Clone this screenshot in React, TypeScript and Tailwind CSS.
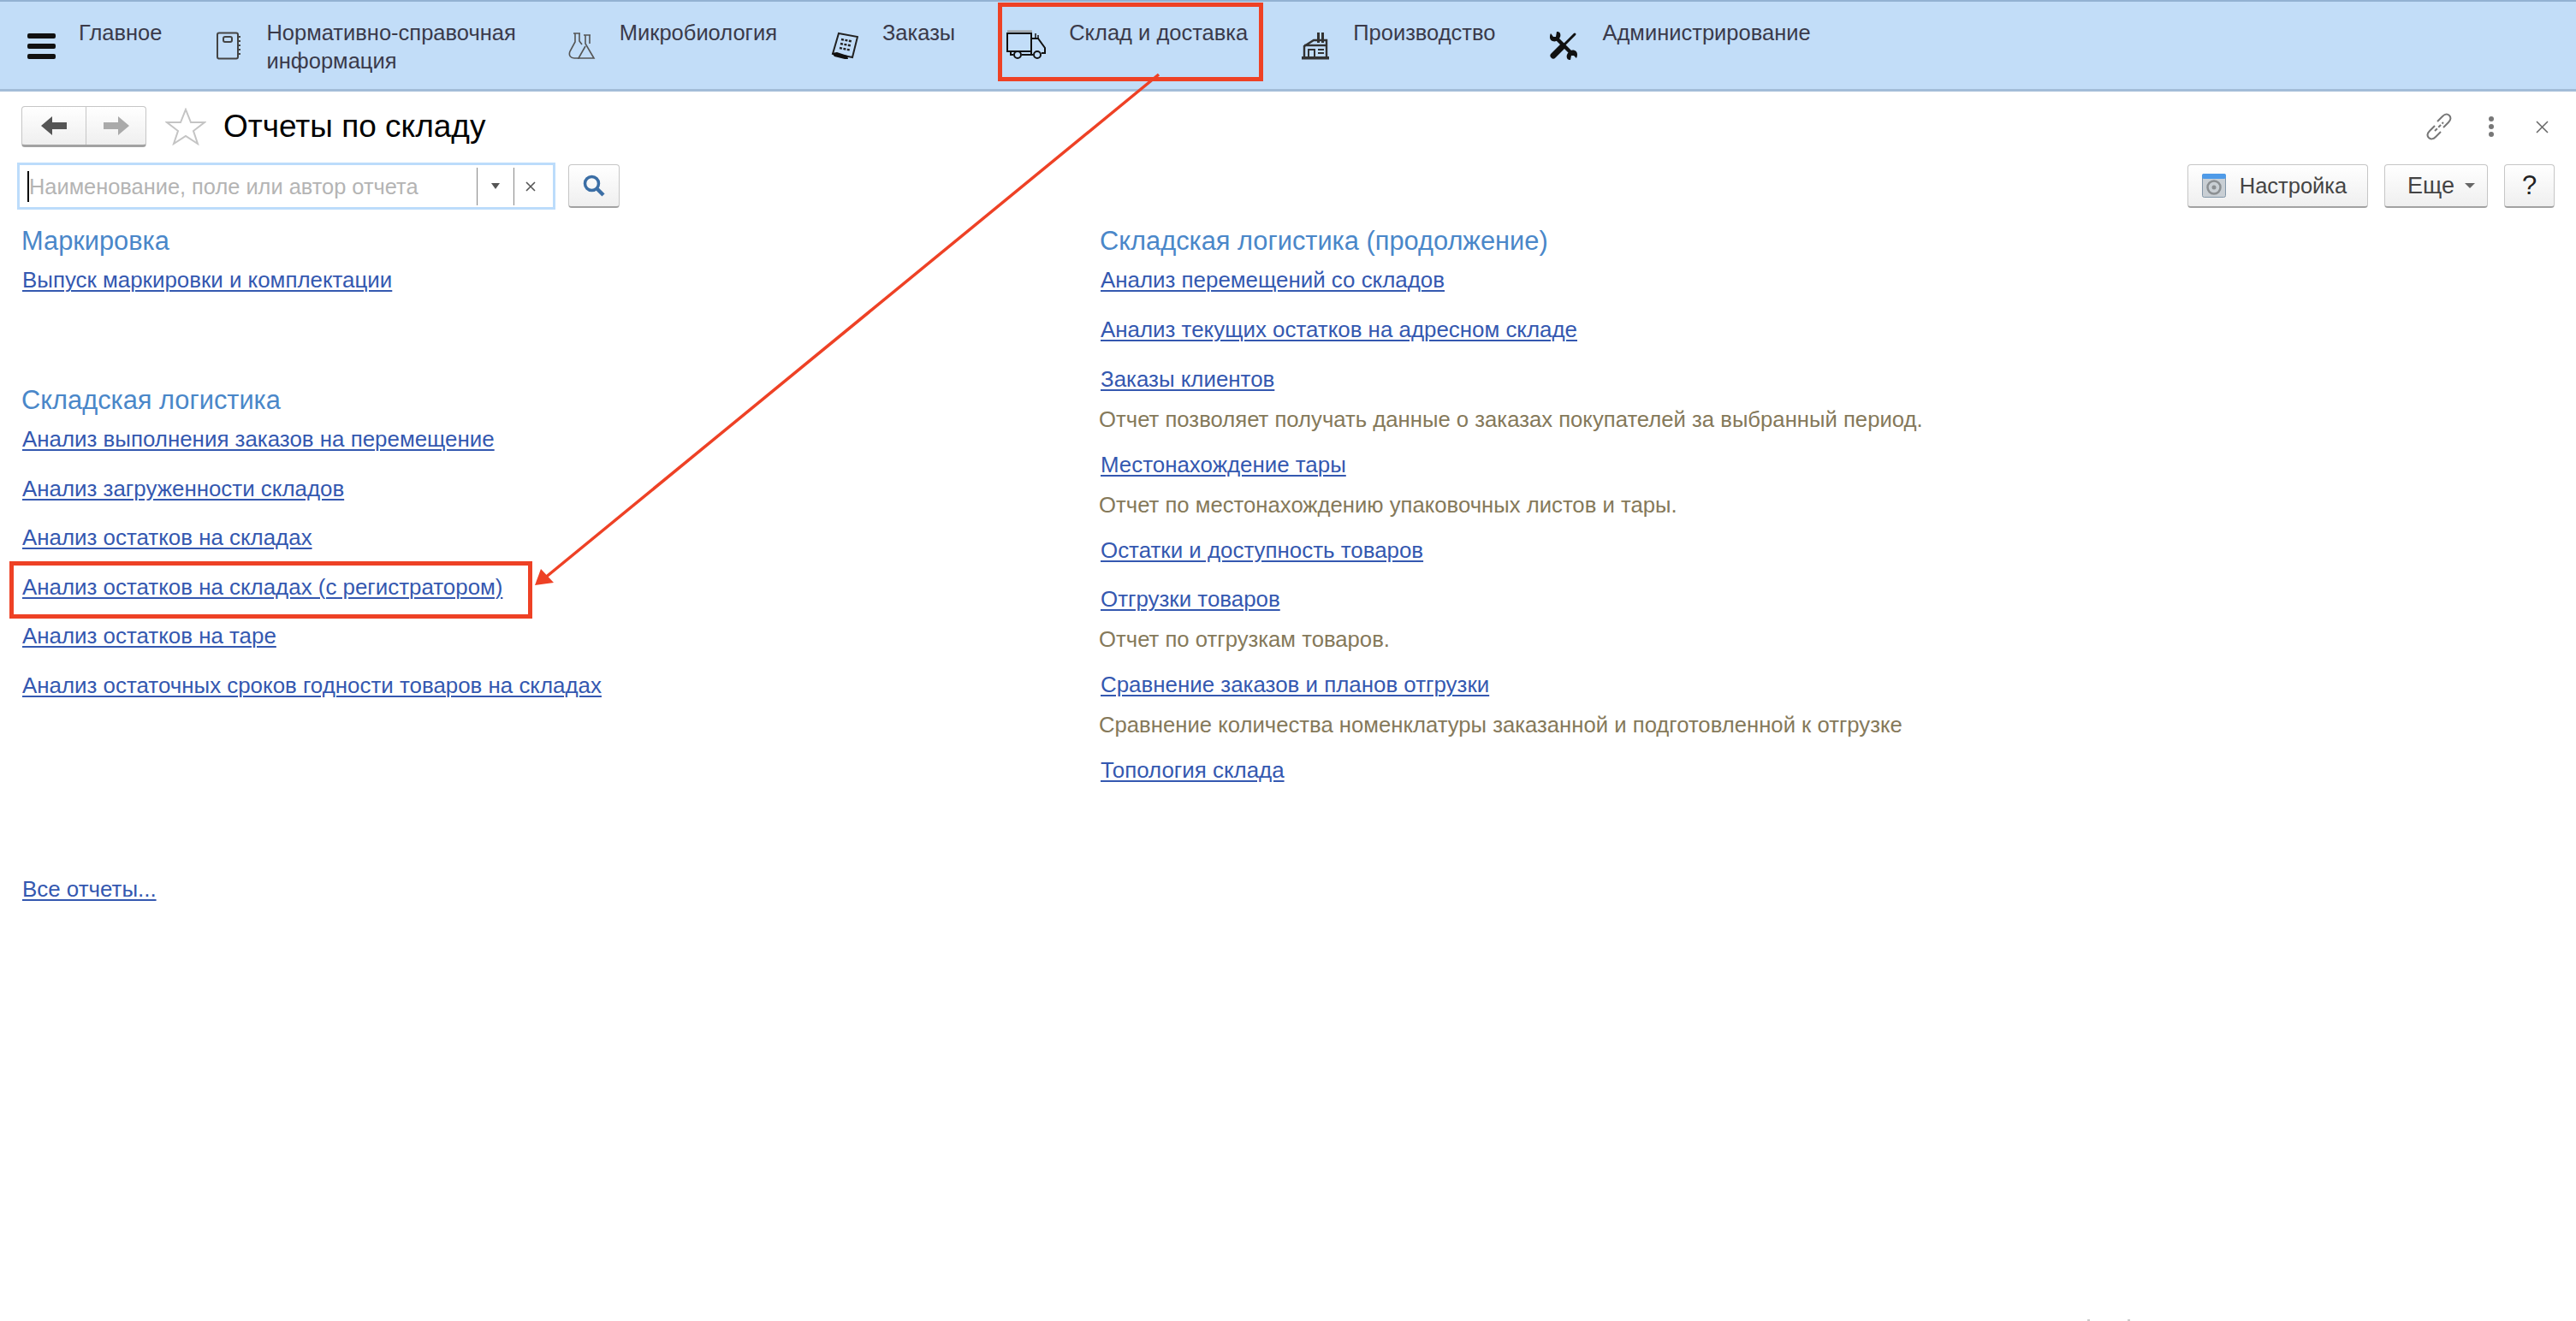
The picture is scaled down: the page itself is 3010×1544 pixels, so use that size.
const navItems = [
  { id: 'home', lines: ['Главное'], className: 'flex gap-[27px]' },
  { id: 'book', lines: ['Нормативно-справочная', 'информация'], className: 'flex gap-[28px] ml-[63px]' },
  { id: 'flask', lines: ['Микробиология'], className: 'flex gap-[28px] ml-[61px]' },
  { id: 'order', lines: ['Заказы'], className: 'flex gap-[28px] ml-[63px]' },
  { id: 'truck', lines: ['Склад и доставка'], className: 'flex gap-[27px] ml-[60px]' },
  { id: 'factory', lines: ['Производство'], className: 'flex gap-[28px] ml-[63px]' },
  { id: 'tools', lines: ['Администрирование'], className: 'flex gap-[28px] ml-[63px]' },
];

const leftTop = ['Выпуск маркировки и комплектации'];

const leftBottom = [
  'Анализ выполнения заказов на перемещение',
  'Анализ загруженности складов',
  'Анализ остатков на складах',
  'Анализ остатков на складах (с регистратором)',
  'Анализ остатков на таре',
  'Анализ остаточных сроков годности товаров на складах',
];

const rightReports = [
  { title: 'Анализ перемещений со складов' },
  { title: 'Анализ текущих остатков на адресном складе' },
  { title: 'Заказы клиентов', desc: 'Отчет позволяет получать данные о заказах покупателей за выбранный период.' },
  { title: 'Местонахождение тары', desc: 'Отчет по местонахождению упаковочных листов и тары.' },
  { title: 'Остатки и доступность товаров' },
  { title: 'Отгрузки товаров', desc: 'Отчет по отгрузкам товаров.' },
  { title: 'Сравнение заказов и планов отгрузки', desc: 'Сравнение количества номенклатуры заказанной и подготовленной к отгрузке' },
  { title: 'Топология склада' },
];

function NavIcon({ id }: { id: string }) {
  if (id === 'home') {
    return (
      <svg viewBox="0 0 33 30" className="w-[33px] h-[30px] mt-[17px]">
        <rect x="0" y="0" width="33" height="6" rx="2" fill="#111" />
        <rect x="0" y="12" width="33" height="6" rx="2" fill="#111" />
        <rect x="0" y="24" width="33" height="6" rx="2" fill="#111" />
      </svg>
    );
  }
  if (id === 'book') {
    return (
      <svg viewBox="0 0 31 33" className="w-[31px] h-[33px] mt-[15px]" fill="none" stroke="#444" strokeWidth="2">
        <rect x="2" y="1.5" width="24" height="30" rx="2" />
        <rect x="9" y="6" width="10" height="6" rx="2" />
        <path d="M26 6h3M26 11h3M26 16h3M26 21h3M26 26h3" />
      </svg>
    );
  }
  if (id === 'flask') {
    return (
      <svg viewBox="0 0 32 33" className="w-[32px] h-[33px] mt-[15px]" fill="none" stroke="#555" strokeWidth="1.6">
        <path d="M6 2h8M8 2v10L2 23c-2 5 1 8 5 8h6" />
        <path d="M13 2v9l3 4" />
        <path d="M18 4h8M20 4v10l10 17H12l8-14" />
        <path d="M25 4v10" />
      </svg>
    );
  }
  if (id === 'order') {
    return (
      <svg viewBox="0 0 32 33" className="w-[32px] h-[33px] mt-[15px]">
        <path d="M9 2l22 4-6 24-5-1-18-3z" fill="none" stroke="#222" strokeWidth="2" />
        <path d="M12 9l13 2.5M11 14l13 2.5M10 19l12 2.5" stroke="#222" strokeWidth="2.4" strokeDasharray="3 1.5" />
        <path d="M1 25l6-1 12 4 1 4-4 0-12-3z" fill="#111" />
      </svg>
    );
  }
  if (id === 'truck') {
    return (
      <svg viewBox="0 0 46 34" className="w-[46px] h-[34px] mt-[13px]" fill="none" stroke="#111" strokeWidth="2">
        <path d="M1 1.5h29" stroke="#999" />
        <rect x="1" y="4" width="28" height="21" />
        <path d="M29 10h8l8 11v6h-4M5 25v4h3M18 29h13M29 25v4" />
        <path d="M34 10v-6M37 10v-4" strokeWidth="1.5" />
        <circle cx="13" cy="29" r="4" />
        <circle cx="36" cy="29" r="4" />
      </svg>
    );
  }
  if (id === 'factory') {
    return (
      <svg viewBox="0 0 32 33" className="w-[32px] h-[33px] mt-[15px]">
        <rect x="18" y="1" width="3" height="12" fill="#333" />
        <rect x="23" y="1" width="3" height="12" fill="#333" />
        <path d="M3 30V17l11-7h15v20" fill="none" stroke="#333" strokeWidth="2.4" />
        <rect x="0" y="29" width="32" height="3.5" fill="#333" />
        <path d="M3 16h26" stroke="#333" strokeWidth="2.4" />
        <rect x="8" y="21" width="7" height="9" fill="none" stroke="#333" strokeWidth="2" />
        <path d="M19 21h7M19 25h7" stroke="#333" strokeWidth="2" />
      </svg>
    );
  }
  return (
    <svg viewBox="0 0 34 33" className="w-[34px] h-[33px] mt-[15px]">
      {/* screwdriver, handle lower left */}
      <path d="M30 3L15 18" stroke="#111" strokeWidth="3" strokeLinecap="round" />
      <path d="M16 17L5 28" stroke="#111" strokeWidth="7" strokeLinecap="round" />
      {/* wrench, jaws at both ends */}
      <path d="M8 7l19 19" stroke="#111" strokeWidth="4.5" />
      <path d="M2 2c-2 4-1 8 2 9 3 1 5 0 7-2 2-2 3-4 2-7-1-2-3-2-4-2L8 6 5 6z" fill="#111" />
      <path d="M32 31c2-4 1-8-2-9-3-1-5 0-7 2-2 2-3 4-2 7 1 2 3 2 4 2l1-5 3 0z" fill="#111" />
    </svg>
  );
}

function NavBar() {
  return (
    <div className="flex h-[107px] pl-[32px] pt-[20px] bg-[#c2ddf8] border-t-2 border-t-[#93b2d2] border-b-[3px] border-b-[#a3bdd8]">
      {navItems.map(item => (
        <div key={item.id} className={item.className}>
          <NavIcon id={item.id} />
          <div className="text-[25.5px] leading-[33px] text-[#3a3a4a] whitespace-nowrap">
            {item.lines.map(line => (
              <div key={line}>{line}</div>
            ))}
          </div>
        </div>
      ))}
    </div>
  );
}

const buttonClass =
  'flex items-center justify-center h-[51px] rounded-[4px] border border-[#c6c6c6] border-b-2 border-b-[#a2a2a2] bg-gradient-to-b from-white to-[#efefef]';

function TitleRow() {
  return (
    <div className="flex items-center h-[48px] mt-[17px] pl-[25px] pr-[32px]">
      <div className="flex h-[48px] w-[146px] rounded-[4px] border border-[#c6c6c6] border-b-[3px] border-b-[#a2a2a2] bg-gradient-to-b from-white to-[#efefef]">
        <div className="flex w-[75px] items-center justify-center border-r border-[#c6c6c6]">
          <svg viewBox="0 0 30 22" className="w-[30px] h-[22px]">
            <path d="M0 11L13 0v7h17v8H13v7z" fill="#555" />
          </svg>
        </div>
        <div className="flex flex-1 items-center justify-center">
          <svg viewBox="0 0 30 22" className="w-[30px] h-[22px]">
            <path d="M30 11L17 0v7H0v8h17v7z" fill="#aaa" />
          </svg>
        </div>
      </div>
      <svg viewBox="0 0 48 44" className="w-[48px] h-[44px] ml-[22px]">
        <path d="M24 2l6 15h16l-13 10 5 15-14-9-14 9 5-15L2 17h16z" fill="none" stroke="#c4c4c4" strokeWidth="2" />
      </svg>
      <div className="ml-[20px] text-[37px] leading-[48px] text-black">Отчеты по складу</div>
      <div className="flex items-center ml-auto">
        <svg viewBox="0 0 32 32" className="w-[32px] h-[32px]" fill="none" stroke="#777" strokeWidth="2">
          <path d="M14 10l6-6c3-3 6-3 8-1s2 5-1 8l-6 6" />
          <path d="M18 22l-6 6c-3 3-6 3-8 1s-2-5 1-8l6-6" />
          <path d="M11 21l10-10" strokeDasharray="4 2" />
        </svg>
        <div className="flex flex-col gap-[3px] ml-[42px]">
          <div className="w-[6px] h-[6px] rounded-full bg-[#777]" />
          <div className="w-[6px] h-[6px] rounded-full bg-[#777]" />
          <div className="w-[6px] h-[6px] rounded-full bg-[#777]" />
        </div>
        <svg viewBox="0 0 15 15" className="w-[15px] h-[15px] ml-[49px]" stroke="#666" strokeWidth="1.5">
          <path d="M1 1l13 13M14 1L1 14" />
        </svg>
      </div>
    </div>
  );
}

function SearchRow() {
  return (
    <div className="flex items-center h-[55px] mt-[18px] pl-[20px] pr-[25px]">
      <div className="flex items-center h-[55px] w-[629px] border-[3px] border-[#bcdcfb] bg-white">
        <div className="flex items-center flex-1 h-full pl-[9px] overflow-hidden">
          <div className="w-[2px] h-[36px] bg-black shrink-0" />
          <div className="pt-[2px] text-[25.4px] text-[#b4b4b4] whitespace-nowrap">Наименование, поле или автор отчета</div>
        </div>
        <div className="flex items-center justify-center w-[43px] h-[44px] border-l border-[#888]">
          <div className="w-0 h-0 border-x-[5px] border-x-transparent border-t-[7px] border-t-[#555]" />
        </div>
        <div className="flex items-center justify-center w-[46px] h-[44px] pr-[8px] border-l border-[#888]">
          <svg viewBox="0 0 12 12" className="w-[12px] h-[12px]" stroke="#555" strokeWidth="1.6">
            <path d="M1 1l10 10M11 1L1 11" />
          </svg>
        </div>
      </div>
      <div className={`${buttonClass} w-[60px] ml-[15px]`}>
        <svg viewBox="0 0 26 26" className="w-[26px] h-[26px]" fill="none" stroke="#3b6ea5" strokeWidth="3.5">
          <circle cx="10.5" cy="10.5" r="8" />
          <path d="M16 16l8 8" strokeWidth="4.5" />
        </svg>
      </div>
      <div className={`${buttonClass} w-[211px] ml-auto gap-[16px] pr-[8px] text-[25.5px] text-[#444]`}>
        <svg viewBox="0 0 28 28" className="w-[28px] h-[28px]">
          <rect x="0.5" y="0.5" width="27" height="27" rx="2" fill="#c9cfd4" stroke="#8296a8" />
          <rect x="0" y="0" width="28" height="6" rx="2" fill="#4f9be8" />
          <circle cx="14" cy="16" r="7.5" fill="none" stroke="#8b8f92" strokeWidth="2.5" />
          <circle cx="14" cy="16" r="2.5" fill="#8b8f92" />
        </svg>
        <span>Настройка</span>
      </div>
      <div className={`${buttonClass} w-[121px] ml-[19px] gap-[12px] pl-[12px] text-[27px] text-[#444]`}>
        <span>Еще</span>
        <div className="w-0 h-0 border-x-[6px] border-x-transparent border-t-[6px] border-t-[#666]" />
      </div>
      <div className={`${buttonClass} w-[59px] ml-[19px] text-[31px] text-[#222]`}>?</div>
    </div>
  );
}

function ReportLink({ title }: { title: string }) {
  return (
    <div className="flex items-center h-[57.6px] pl-[1px] text-[25.9px] text-[#3458b0]">
      <span className="underline decoration-[2px] underline-offset-[3px] whitespace-nowrap">{title}</span>
    </div>
  );
}

function Heading({ title }: { title: string }) {
  return <div className="h-[37px] text-[30.8px] leading-[39px] text-[#4a87c9] whitespace-nowrap">{title}</div>;
}

function Reports() {
  return (
    <div className="flex mt-[17px]">
      <div className="w-[1259px] pl-[25px]">
        <Heading title="Маркировка" />
        {leftTop.map(title => (
          <ReportLink key={title} title={title} />
        ))}
        <div className="mt-[91px]">
          <Heading title="Складская логистика" />
        </div>
        {leftBottom.map(title => (
          <ReportLink key={title} title={title} />
        ))}
        <div className="mt-[180px]">
          <ReportLink title="Все отчеты..." />
        </div>
      </div>
      <div className="pl-[26px]">
        <Heading title="Складская логистика (продолжение)" />
        {rightReports.map(report => (
          <div key={report.title}>
            <ReportLink title={report.title} />
            {report.desc && (
              <div className="h-[36px] mb-[6.4px] -ml-[1px] text-[25.7px] leading-[36px] text-[#85795a] whitespace-nowrap">
                {report.desc}
              </div>
            )}
          </div>
        ))}
      </div>
    </div>
  );
}

export default function App() {
  return (
    <div className="relative h-[1544px] w-full overflow-hidden bg-white font-['Liberation_Sans',Arial,sans-serif]">
      <NavBar />
      <TitleRow />
      <SearchRow />
      <Reports />

      {/* red callouts on top of the screenshot */}
      <div className="absolute left-[1166px] top-[3px] w-[310px] h-[92px] border-[5px] border-[#ee4125]" />
      <div className="absolute left-[11px] top-[656px] w-[611px] h-[67px] border-[5px] border-[#ee4125]" />
      <svg className="absolute left-0 top-0 w-[3010px] h-[1544px] pointer-events-none" viewBox="0 0 3010 1544">
        <path d="M1354 87L636 676" stroke="#ee4125" strokeWidth="3.5" />
        <path d="M625 684L632 665L647 681z" fill="#ee4125" />
      </svg>

      <div className="absolute left-[2439px] bottom-0 w-[3px] h-[2px] bg-[#ccc]" />
      <div className="absolute left-[2486px] bottom-0 w-[3px] h-[2px] bg-[#ccc]" />
    </div>
  );
}
